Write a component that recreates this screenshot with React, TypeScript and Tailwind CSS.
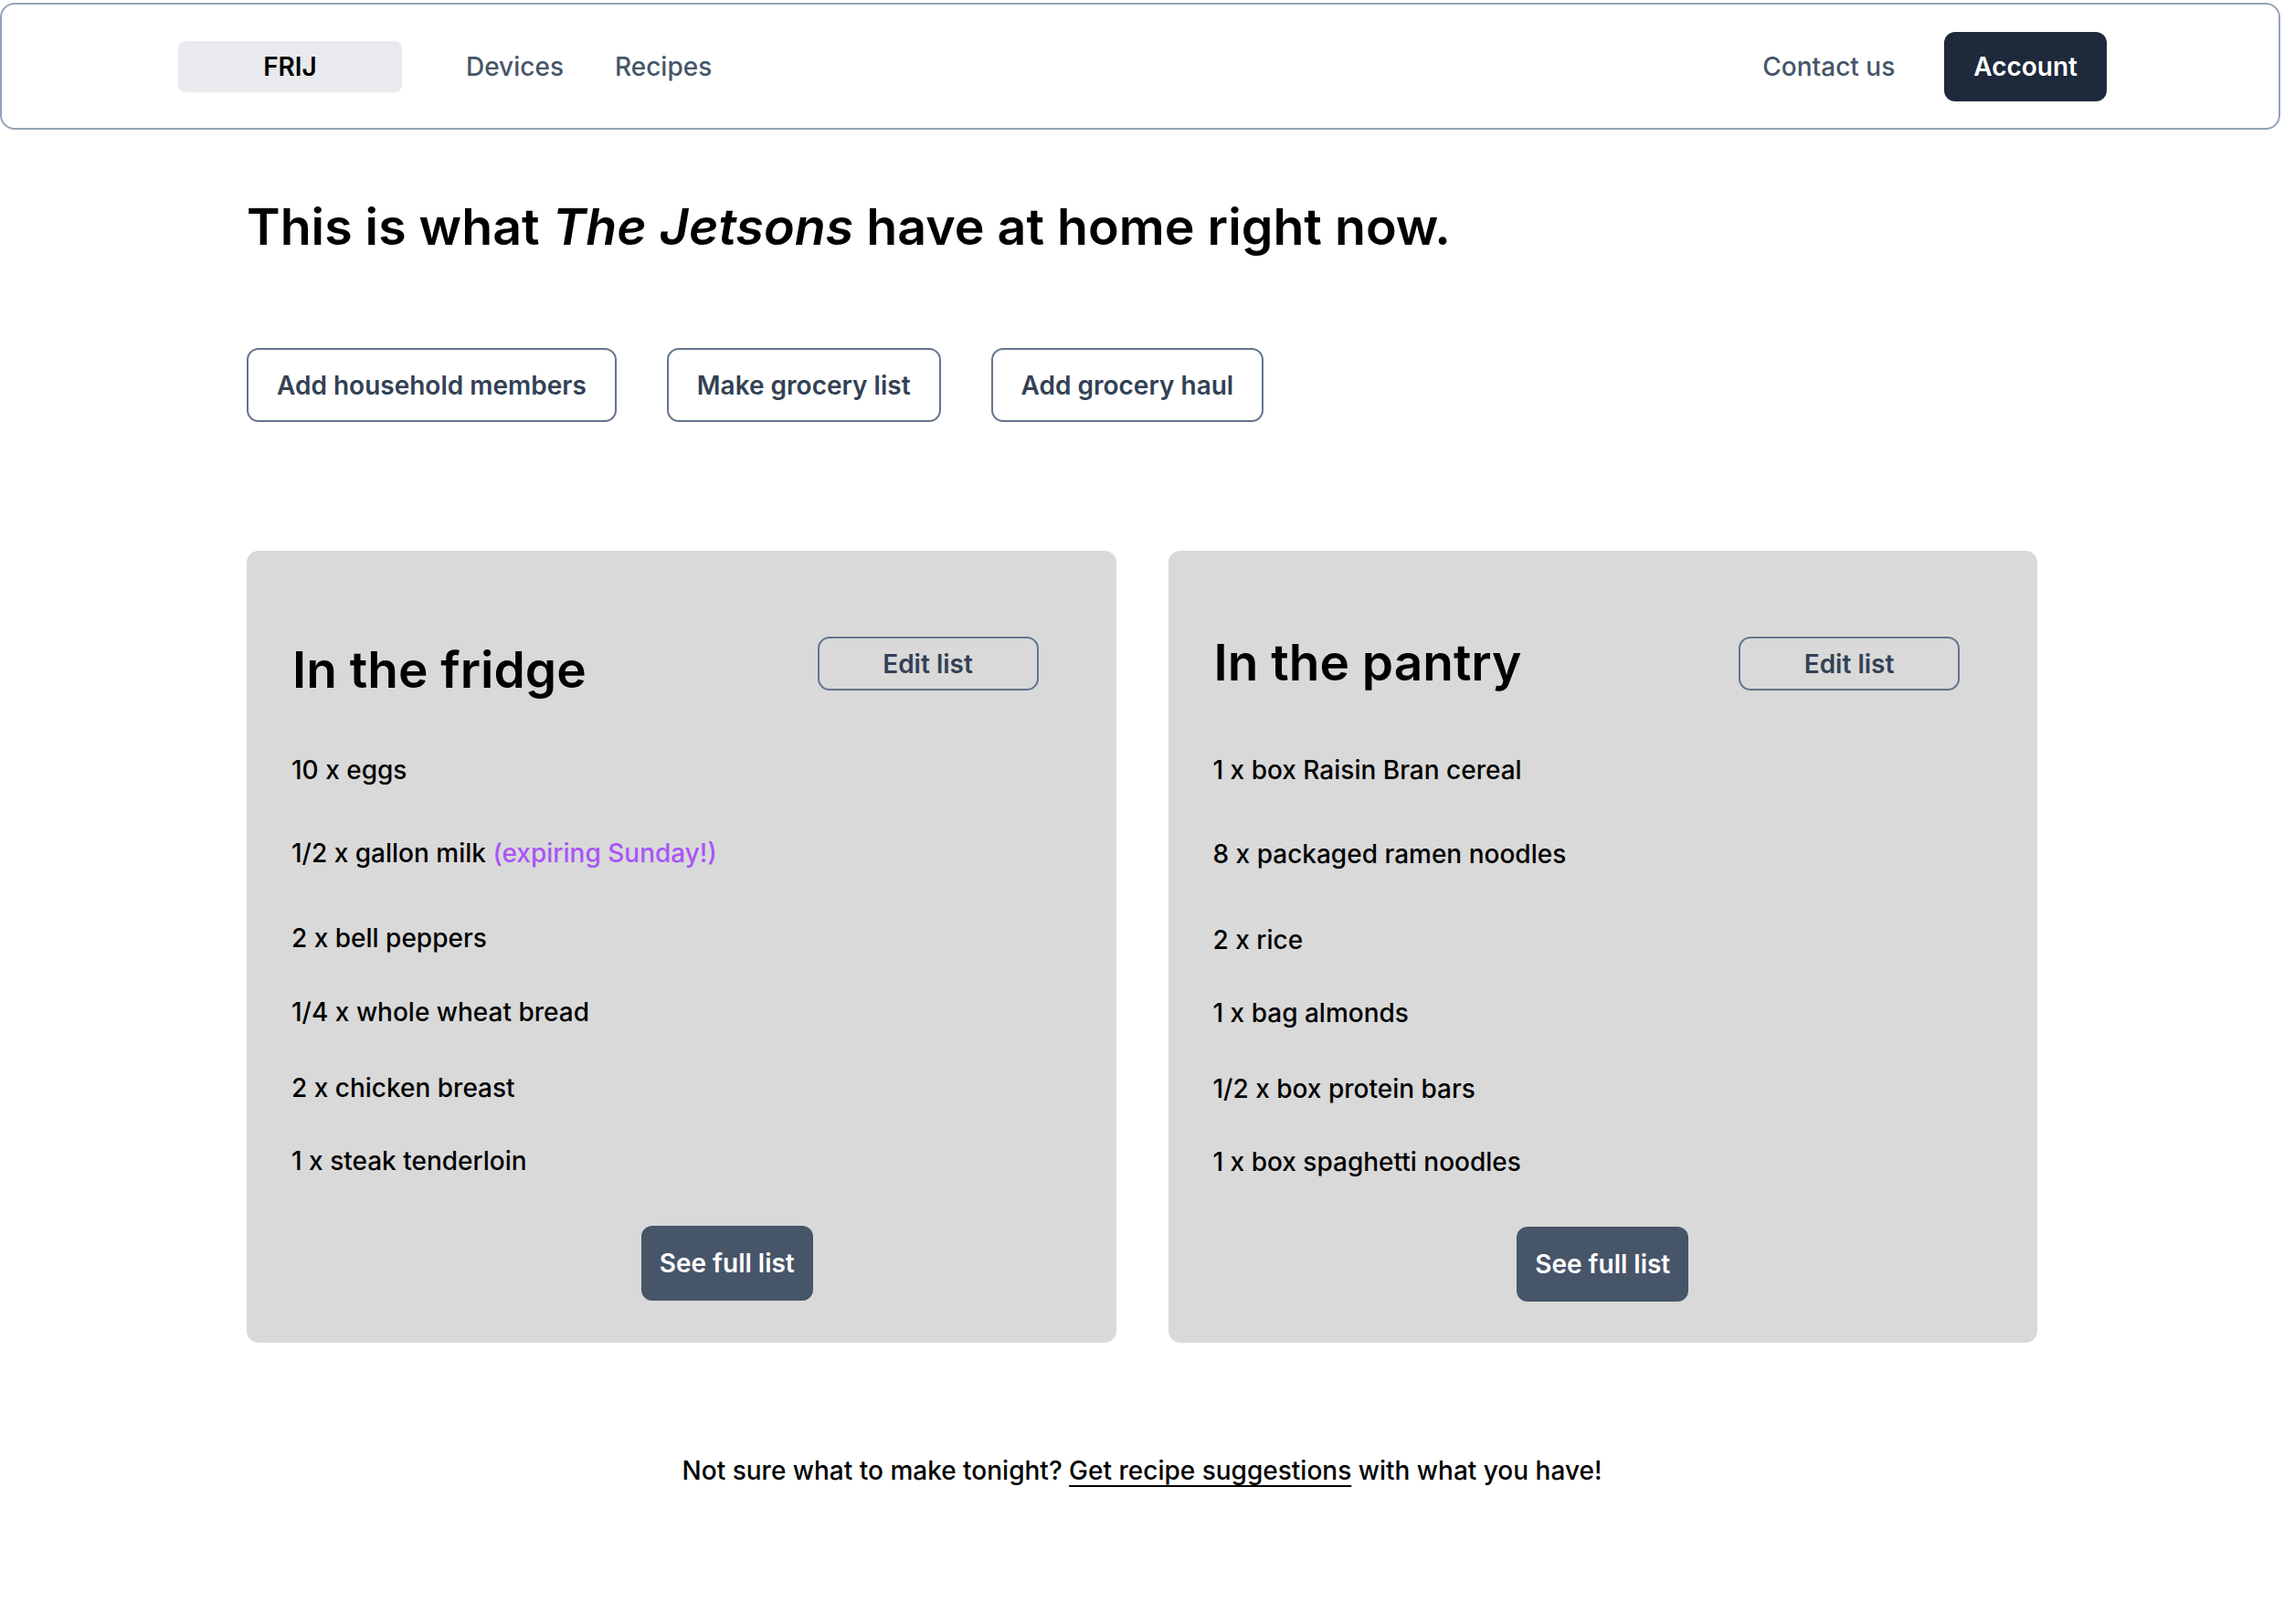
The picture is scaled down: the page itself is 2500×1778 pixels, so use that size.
import React from "react";

type Item = { text: string; extra?: string; mt: string };

const fridge: Item[] = [
  { text: "10 x eggs", mt: "mt-0" },
  { text: "1/2 x gallon milk", extra: "(expiring Sunday!)", mt: "mt-[51px]" },
  { text: "2 x bell peppers", mt: "mt-[53px]" },
  { text: "1/4 x whole wheat bread", mt: "mt-[41px]" },
  { text: "2 x chicken breast", mt: "mt-[43px]" },
  { text: "1 x steak tenderloin", mt: "mt-[40px]" },
];

const pantry: Item[] = [
  { text: "1 x box Raisin Bran cereal", mt: "mt-0" },
  { text: "8 x packaged ramen noodles", mt: "mt-[52px]" },
  { text: "2 x rice", mt: "mt-[54px]" },
  { text: "1 x bag almonds", mt: "mt-[40px]" },
  { text: "1/2 x box protein bars", mt: "mt-[43px]" },
  { text: "1 x box spaghetti noodles", mt: "mt-[40px]" },
];

function Card({
  title,
  items,
  titleClass,
  listClass,
  buttonWrap,
}: {
  title: string;
  items: Item[];
  titleClass: string;
  listClass: string;
  buttonWrap: string;
}) {
  return (
    <div className="flex-1 rounded-[13px] bg-[#d9d9d9] pt-[88px] pb-[45px]">
      <div className="flex items-start justify-between pl-[50px] pr-[85px]">
        <h2 className={"text-[55px] leading-[68px] font-semibold text-black " + titleClass}>{title}</h2>
        <button className="mt-[6px] h-[59px] w-[242px] rounded-[13px] border-2 border-[#64748b] text-[28px] font-semibold text-[#334155]">
          Edit list
        </button>
      </div>
      <ul className={"flex flex-col pl-[49px] " + listClass}>
        {items.map((it) => (
          <li key={it.text} className={"text-[28px] leading-[40px] font-medium text-black " + it.mt}>
            {it.text}
            {it.extra ? <span className="text-[#a855f7]"> {it.extra}</span> : null}
          </li>
        ))}
      </ul>
      <div className={"mt-[51px] flex justify-center " + buttonWrap}>
        <button className="h-[82px] w-[188px] rounded-[12px] bg-[#475569] text-[28px] font-semibold text-white">
          See full list
        </button>
      </div>
    </div>
  );
}

export default function App() {
  return (
    <div className="min-h-[1778px] w-full bg-white font-[Inter,sans-serif] text-black">
      <nav className="mt-[3px] mr-[4px] flex h-[139px] items-center rounded-[16px] border-2 border-[#94a3b8] pl-[193px] pr-[188px]">
        <div className="flex h-[56px] w-[245px] items-center justify-center rounded-[8px] bg-[#e9eaee] text-[28px] font-semibold text-black">
          FRIJ
        </div>
        <a className="ml-[70px] text-[28px] font-medium text-[#475569]">Devices</a>
        <a className="ml-[56px] text-[28px] font-medium text-[#475569]">Recipes</a>
        <div className="flex-1" />
        <a className="text-[28px] font-medium text-[#475569]">Contact us</a>
        <button className="ml-[54px] h-[76px] rounded-[12px] bg-[#1e293b] px-[32px] text-[28px] font-semibold text-white">
          Account
        </button>
      </nav>

      <main className="mx-auto w-[1960px]">
        <h1 className="mt-[73px] text-[55.5px] leading-[65px] font-semibold text-black">
          This is what <em>The Jetsons</em> have at home right now.
        </h1>

        <div className="mt-[101px] flex gap-[55px]">
          <button className="h-[81px] rounded-[13px] border-2 border-[#64748b] px-[31px] text-[28px] font-semibold text-[#334155]">
            Add household members
          </button>
          <button className="h-[81px] rounded-[13px] border-2 border-[#64748b] px-[31px] text-[28px] font-semibold text-[#334155]">
            Make grocery list
          </button>
          <button className="h-[81px] rounded-[13px] border-2 border-[#64748b] px-[31px] text-[28px] font-semibold text-[#334155]">
            Add grocery haul
          </button>
        </div>

        <div className="mt-[141px] flex gap-[57px]">
          <Card title="In the fridge" items={fridge} titleClass="mt-[8px]" listClass="mt-[56px]" buttonWrap="pl-[100px]" />
          <Card title="In the pantry" items={pantry} titleClass="" listClass="mt-[64px]" buttonWrap="" />
        </div>

        <p className="mt-[120px] text-center text-[28px] leading-[40px] font-medium text-black">
          Not sure what to make tonight?{" "}
          <a className="underline decoration-2 underline-offset-[6px]">Get recipe suggestions</a> with what you have!
        </p>
      </main>
    </div>
  );
}
